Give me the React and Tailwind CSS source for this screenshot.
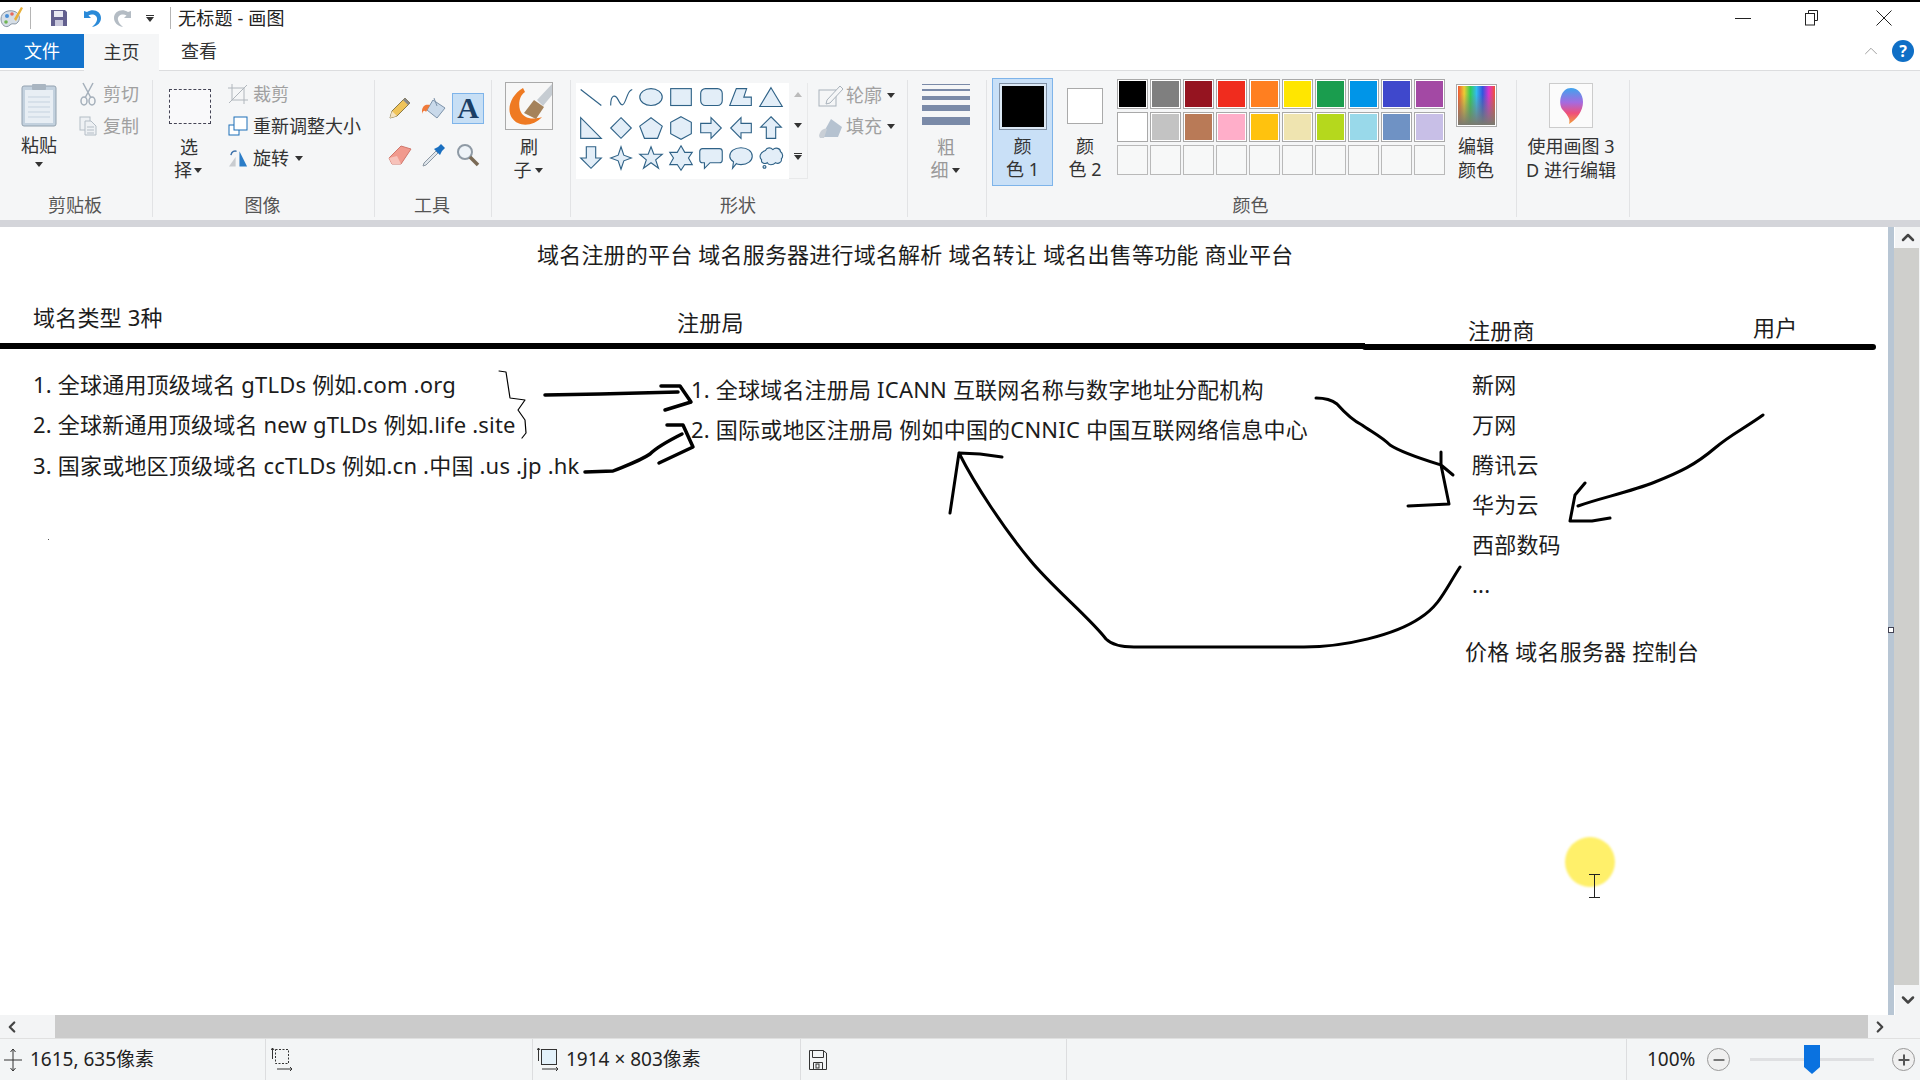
import React from 'react';
import { ChevronUp, ChevronDown, ChevronLeft, ChevronRight, Minus, Plus } from 'lucide-react';

const Caret = ({ className = '' }) => (
  <svg width="8" height="5" viewBox="0 0 8 5" className={className}><path d="M0 0h8L4 5z" fill="#333" /></svg>
);

const shapes = [
  <path d="M4 7 26 24" fill="none" />,
  <path d="M4 24C4 12 9 12 12 18S17 26 20 18 24 8 27 7" fill="none" />,
  <ellipse cx="15" cy="15" rx="12" ry="9" />,
  <rect x="4" y="6" width="22" height="18" />,
  <rect x="4" y="6" width="23" height="18" rx="5" />,
  <path d="M3 24 10 6H21L18 15H26V24Z" />,
  <path d="M15 5 27 25H3Z" />,
  <path d="M4 5 26 27H4Z" />,
  <path d="M15 5 26 16 15 27 4 16Z" />,
  <path d="M15 5 27 14 22 27H8L3 14Z" />,
  <path d="M15 4 26 10V22L15 28 4 22V10Z" />,
  <path d="M4 11H15V5L26 16 15 27V21H4Z" />,
  <path d="M26 11H15V5L4 16 15 27V21H26Z" />,
  <path d="M15 4 26 15H20V27H10V15H4Z" />,
  <path d="M10 4H20V16H26L15 27 4 16H10Z" />,
  <path d="M15 4 18 13 26 16 18 19 15 28 12 19 4 16 12 13Z" />,
  <path d="M15 4 18 12 27 12 20 18 23 27 15 21 7 27 10 18 3 12 12 12Z" />,
  <path d="M15 3 19 10H27L23 16 27 23H19L15 29 11 23H3L7 16 3 10H11Z" />,
  <path d="M6 6H24Q27 6 27 9V18Q27 21 24 21H14L8 27V21H6Q3 21 3 18V9Q3 6 6 6Z" />,
  <path d="M15 5C22 5 27 9 27 14S22 23 15 23C13 23 11 23 10 22L6 27 7 20C4 18 3 16 3 14 3 9 8 5 15 5Z" />,
  <path d="M9 8C11 4 15 5 17 7 20 4 25 6 25 9 28 11 28 15 26 17 27 20 23 23 20 21 17 24 12 24 11 21 8 23 4 21 5 18 2 15 3 10 9 8ZM8 24A1.500 1.500 0 1 0 8.100 24" />,
];

const row1 = ['bg-[#000000]', 'bg-[#7f7f7f]', 'bg-[#951420]', 'bg-[#f02c1e]', 'bg-[#ff7f20]', 'bg-[#ffe600]', 'bg-[#1a9d4e]', 'bg-[#0095e8]', 'bg-[#3f48cc]', 'bg-[#a349a4]'];
const row2 = ['bg-[#ffffff]', 'bg-[#c3c3c3]', 'bg-[#b97a57]', 'bg-[#ffaec9]', 'bg-[#ffc20e]', 'bg-[#efe4b0]', 'bg-[#b5d81d]', 'bg-[#99d9ea]', 'bg-[#6f92c4]', 'bg-[#c8bfe7]'];

const canvasText = [
  ['left-[537px] top-[13px]', '域名注册的平台 域名服务器进行域名解析 域名转让 域名出售等功能 商业平台'],
  ['left-[33px] top-[76px]', '域名类型 3种'],
  ['left-[677px] top-[81px]', '注册局'],
  ['left-[1468px] top-[89px]', '注册商'],
  ['left-[1753px] top-[86px]', '用户'],
  ['left-[33px] top-[143px]', '1. 全球通用顶级域名 gTLDs 例如.com .org'],
  ['left-[33px] top-[183px]', '2. 全球新通用顶级域名 new gTLDs 例如.life .site'],
  ['left-[33px] top-[224px]', '3. 国家或地区顶级域名 ccTLDs 例如.cn .中国 .us .jp .hk'],
  ['left-[691px] top-[148px]', '1. 全球域名注册局 ICANN 互联网名称与数字地址分配机构'],
  ['left-[691px] top-[188px]', '2. 国际或地区注册局 例如中国的CNNIC 中国互联网络信息中心'],
  ['left-[1472px] top-[143px]', '新网'],
  ['left-[1472px] top-[183px]', '万网'],
  ['left-[1472px] top-[223px]', '腾讯云'],
  ['left-[1472px] top-[263px]', '华为云'],
  ['left-[1472px] top-[303px]', '西部数码'],
  ['left-[1472px] top-[343px]', '...'],
  ['left-[1465px] top-[410px]', '价格 域名服务器 控制台'],
];

const Group = ({ width, label, children }) => (
  <div className={`${width} h-full shrink-0 flex flex-col border-r border-[#e2e3e5]`}>
    <div className="flex-1 flex -mt-[2px]">{children}</div>
    <div className="h-[24px] leading-[24px] text-center text-[18px] text-[#555] pr-[2px]">{label}</div>
  </div>
);

const Row = ({ icon, text, muted, caret }) => (
  <div className={`h-[32px] flex items-center gap-[5px] ${muted ? 'text-[#a0a0a0]' : 'text-[#333]'}`}>
    <div className="w-[20px] h-[22px] flex items-center justify-center">{icon}</div>
    <span className="text-[18px]">{text}</span>
    {caret && <Caret className="ml-[1px]" />}
  </div>
);

export default function App() {
  return (
    <div className="w-[1920px] h-[1080px] flex flex-col overflow-hidden bg-white font-['Noto_Sans','Noto_Sans_CJK_SC',sans-serif] text-[#222]">
      <div className="h-[2px] bg-black" />

      {/* title bar */}
      <div className="h-[32px] flex items-center bg-white relative">
        <svg width="24" height="26" viewBox="0 0 24 26" className="-ml-[1px]">
          <path d="M2 14C2 7 9 5 14 6 20 7 22 13 19 17 16 21 14 17 11 20 7 24 2 20 2 14Z" fill="#d6dee6" stroke="#8a97a5" />
          <circle cx="8" cy="11" r="2" fill="#4a90d9" /><circle cx="13" cy="9" r="1.800" fill="#e86a5c" /><circle cx="7" cy="17" r="1.800" fill="#6fb552" />
          <path d="M15 14 22 2 24 3 17 16Z" fill="#e8b13a" />
        </svg>
        <div className="w-px h-[22px] bg-[#b5b5b5] ml-[7px]" />
        <svg width="18" height="18" viewBox="0 0 18 18" className="ml-[19px]">
          <path d="M1 1H15L17 3V17H1Z" fill="#63608f" /><rect x="4" y="2" width="9" height="6" fill="#e8e8f2" /><rect x="5" y="11" width="8" height="6" fill="#c9c8dc" />
        </svg>
        <svg width="20" height="22" viewBox="0 0 20 22" className="ml-[14px]">
          <path d="M2 4V11H9L6.500 8.500C10 6 16 8 15 13 14.500 16 12 18 10 20 16 19 19 15 19 11 19 4 11 1 5 5Z" fill="#2a8ad8" />
        </svg>
        <svg width="20" height="22" viewBox="0 0 20 22" className="ml-[11px]">
          <path d="M18 4V11H11L13.500 8.500C10 6 4 8 5 13 5.500 16 8 18 10 20 4 19 1 15 1 11 1 4 9 1 15 5Z" fill="#b4bcc4" />
        </svg>
        <div className="ml-[13px] flex flex-col items-center gap-[1px]">
          <div className="w-[8px] h-px bg-[#333]" />
          <Caret />
        </div>
        <div className="w-px h-[22px] bg-[#b5b5b5] ml-[16px]" />
        <span className="ml-[7px] text-[18px] text-[#222] tracking-[0.2px]">无标题 - 画图</span>
        <div className="ml-auto flex items-center">
          <div className="w-[16px] h-px bg-[#222] mr-[53px]" />
          <svg width="16" height="16" viewBox="0 0 16 16" className="mr-[56px]" fill="none" stroke="#222">
            <path d="M4.500 3.500V0.500H13.500V10.500H10.500" /><rect x="1.500" y="3.500" width="9" height="11.500" />
          </svg>
          <svg width="16" height="16" viewBox="0 0 16 16" className="mr-[28px]" stroke="#222"><path d="M0.500 0.500 15.500 15.500M15.500 0.500 0.500 15.500" /></svg>
        </div>
      </div>

      {/* tabs */}
      <div className="h-[37px] flex items-start bg-white border-b border-[#dcdddf] text-[18px]">
        <div className="w-[84px] h-[34px] bg-[#1373cc] text-white flex items-center justify-center pt-[1px]">文件</div>
        <div className="w-[75px] h-[37px] bg-[#f5f6f7] text-[#333] flex items-center justify-center pb-[1px]">主页</div>
        <div className="w-[80px] h-[34px] text-[#333] flex items-center justify-center pt-[1px]">查看</div>
        <div className="ml-auto flex items-center h-[34px]">
          <ChevronUp size={22} strokeWidth={1} className="text-[#999] mr-[10px]" />
          <div className="w-[22px] h-[22px] mr-[6px] rounded-full bg-[#0f6fc6] text-white text-[16px] font-bold flex items-center justify-center">?</div>
        </div>
      </div>

      {/* ribbon */}
      <div className="h-[149px] shrink-0 flex bg-[#f5f6f7] pt-[9px] pb-[3px]">
        <Group width="w-[153px]" label="剪贴板">
          <div className="w-[78px] flex flex-col items-center">
            <svg width="36" height="44" viewBox="0 0 36 44" className="mt-[5px]">
              <rect x="1" y="3" width="34" height="40" rx="2" fill="#c3d1de" stroke="#93a2b0" />
              <rect x="4" y="7" width="28" height="33" fill="#e8eef4" />
              <path d="M7 14H29M7 19H29M7 24H29M7 29H29M7 34H29" stroke="#c5d2df" />
              <rect x="11" y="1" width="14" height="6" rx="1" fill="#a9b5c1" />
            </svg>
            <div className="text-[18px] leading-[24px] mt-[6px] text-[#333]">粘贴</div>
            <Caret className="mt-[5px]" />
          </div>
          <div className="flex flex-col">
            <Row muted text="剪切" icon={
              <svg width="16" height="24" viewBox="0 0 16 24" fill="none" stroke="#a5b0bb" strokeWidth="1.500">
                <path d="M3 1 11 16M13 1 5 16" /><ellipse cx="4" cy="19" rx="3" ry="4" /><ellipse cx="12" cy="19" rx="3" ry="4" />
              </svg>} />
            <Row muted text="复制" icon={
              <svg width="18" height="20" viewBox="0 0 18 20" fill="#eef1f4" stroke="#b4bdc6">
                <rect x="1" y="1" width="10" height="13" /><path d="M6 5H12L17 10V19H6Z" /><path d="M8 11H15M8 14H15M8 17H15" />
              </svg>} />
          </div>
        </Group>

        <Group width="w-[222px]" label="图像">
          <div className="w-[72px] flex flex-col items-center text-[18px] leading-[23px] text-[#333]">
            <div className="w-[42px] h-[35px] mt-[11px] ml-[2px] border border-dashed border-[#445] bg-white/40" />
            <div className="mt-[12px]">选</div>
            <div className="flex items-center gap-[2px] -ml-[2px]">择<Caret /></div>
          </div>
          <div className="flex flex-col ml-[3px]">
            <Row muted text="裁剪" icon={
              <svg width="20" height="20" viewBox="0 0 20 20" fill="none" stroke="#b0b6bc"><path d="M4 0V16H20M0 4H16V20M1 19 19 1" /></svg>} />
            <Row text="重新调整大小" icon={
              <svg width="20" height="20" viewBox="0 0 20 20" fill="#fff" stroke="#1d6fb8"><rect x="1" y="9" width="10" height="10" /><rect x="6" y="1" width="13" height="13" /></svg>} />
            <Row caret text="旋转" icon={
              <svg width="21" height="20" viewBox="0 0 21 20"><path d="M1 19 8 9V19Z" fill="#c9ccd0" /><path d="M12 3V19H20Z" fill="#2a7cc7" /><path d="M3 7C4 3 7 2 9 3" fill="none" stroke="#3a6fa8" strokeWidth="1.500" /></svg>} />
          </div>
        </Group>

        <Group width="w-[117px]" label="工具">
          <div className="pl-[8px] pt-[14px] grid grid-cols-[33px_35px_34px] grid-rows-[32px_15px_32px] items-center justify-items-center">
            <svg width="22" height="22" viewBox="0 0 22 22">
              <path d="M1 21 3 14 16 1 21 6 8 19Z" fill="#f0c45a" stroke="#8a7a4a" /><path d="M1 21 3 14 8 19Z" fill="#f5e3c0" /><path d="M14 3 19 8 21 6 16 1Z" fill="#888" />
            </svg>
            <svg width="26" height="24" viewBox="0 0 26 24">
              <path d="M12 4 24 12 16 22 6 14Z" fill="#c9d9ea" stroke="#7d93aa" /><path d="M13 2 16 10" stroke="#7d93aa" fill="none" /><path d="M1 14C2 9 5 8 9 9L5 16C4 14 2 14 1 18Z" fill="#f07a3a" />
            </svg>
            <div className="w-[32px] h-[31px] bg-[#c7dff5] border border-[#7eb4ea] flex items-center justify-center font-['Liberation_Serif',serif] font-bold text-[30px] leading-none text-[#1b3f66]">A</div>
            <div className="col-span-3" />
            <svg width="26" height="22" viewBox="0 0 26 22">
              <path d="M2 14 14 2 24 5 14 20 5 20Z" fill="#f19a8e" stroke="#d0776c" /><path d="M2 14 5 20 14 20 10 12Z" fill="#f7c2ba" />
            </svg>
            <svg width="24" height="24" viewBox="0 0 24 24">
              <path d="M14 8 2 20 1 23 4 22 16 10Z" fill="#dfe5eb" stroke="#8c98a4" /><path d="M12 6 18 12 20 8 23 5 19 1 16 4Z" fill="#1a6fc0" />
            </svg>
            <svg width="24" height="24" viewBox="0 0 24 24" fill="none">
              <circle cx="9" cy="9" r="7" fill="#eef3f8" stroke="#8f9aa5" strokeWidth="2" /><path d="M14 14 22 22" stroke="#7a6a55" strokeWidth="3.500" />
            </svg>
          </div>
        </Group>

        <Group width="w-[79px]" label="">
          <div className="w-full pr-[4px] flex flex-col items-center text-[18px] leading-[23px] text-[#333]">
            <div className="w-[48px] h-[48px] mt-[4px] bg-[#f7f7f7] border border-[#aaa] overflow-hidden">
              <svg width="46" height="46" viewBox="0 0 46 46">
                <path d="M17 5C5 12 0 26 6 35 13 45 28 43 36 34 27 37 17 36 14 27 12 20 14 12 19 9Z" fill="#ef7a22" />
                <path d="M18 30 28 17 38 24 30 36Z" fill="#a5825a" />
                <path d="M31 17 46 1V12L37 23Z" fill="#c6ccd2" />
              </svg>
            </div>
            <div className="mt-[6px]">刷</div>
            <div className="flex items-center gap-[3px] -ml-[2px]">子<Caret /></div>
          </div>
        </Group>

        <Group width="w-[337px]" label="形状">
          <div className="pl-[5px] pt-[5px] flex items-start">
            <div className="w-[213px] h-[96px] bg-white grid grid-cols-[repeat(7,30px)] auto-rows-[30px]">
              {shapes.map((s, i) => (
                <svg key={i} width="30" height="30" viewBox="0 0 30 32" fill="#e3eef8" stroke="#2f6287" strokeWidth="1.200">{s}</svg>
              ))}
            </div>
            <div className="w-[19px] h-[96px] flex flex-col items-center justify-between pt-[9px] pb-[18px] border-r border-b border-[#e8e9ea]">
              <svg width="8" height="5" viewBox="0 0 8 5"><path d="M0 5h8L4 0z" fill="#bbb" /></svg>
              <Caret />
              <div className="flex flex-col items-center gap-[1px]"><div className="w-[8px] h-px bg-[#333]" /><Caret /></div>
            </div>
            <div className="ml-[10px] -mt-[3px]">
              <Row0 icon={
                <svg width="26" height="22" viewBox="0 0 26 22" fill="none" stroke="#a9b2bb"><rect x="1" y="5" width="17" height="16" /><path d="M9 15 22 1 25 4 12 18 8 19Z" fill="#f5f6f7" /></svg>} text="轮廓" />
              <Row0 icon={
                <svg width="26" height="24" viewBox="0 0 26 24"><path d="M3 22 13 4 24 12 20 22Z" fill="#b5c2d0" /><path d="M1 21C2 15 6 13 9 14L6 23H2Z" fill="#c9cfd6" /></svg>} text="填充" />
            </div>
          </div>
        </Group>

        <Group width="w-[79px]" label="">
          <div className="w-full pr-[2px] flex flex-col items-center text-[18px] leading-[23px] text-[#999]">
            <div className="w-[48px] mt-[6px] flex flex-col">
              <div className="h-px bg-[#7a8aa8]" />
              <div className="h-[2px] bg-[#7a8aa8] mt-[4px]" />
              <div className="h-[4px] bg-[#7a8aa8] mt-[5px]" />
              <div className="h-[6px] bg-[#7a8aa8] mt-[5px]" />
              <div className="h-[8px] bg-[#7a8aa8] mt-[6px]" />
            </div>
            <div className="mt-[11px]">粗</div>
            <div className="flex items-center gap-[3px] -ml-[2px]">细<Caret /></div>
          </div>
        </Group>

        <Group width="w-[530px]" label="颜色">
          <div className="flex items-start pl-[5px]">
            <div className="w-[61px] h-[108px] bg-[#c9e0f7] border border-[#7eb4ea] flex flex-col items-center text-[18px] leading-[23px] text-[#333]">
              <div className="w-[48px] h-[47px] mt-[4px] border border-[#7f8fa3] p-[2px] bg-[#dbe8f5]">
                <div className="w-full h-full bg-black" />
              </div>
              <div className="mt-[5px]">颜</div>
              <div>色 1</div>
            </div>
            <div className="w-[54px] ml-[5px] flex flex-col items-center text-[18px] leading-[23px] text-[#333]">
              <div className="w-[36px] h-[36px] mt-[10px] bg-white border border-[#aaa]" />
              <div className="mt-[11px]">颜</div>
              <div>色 2</div>
            </div>
            <div className="ml-[5px] mt-[1px] grid grid-cols-[repeat(10,31px)] auto-rows-[30px] gap-x-[2px] gap-y-[3px]">
              {row1.map((c) => (
                <div key={c} className="border border-[#a9a9a9] p-[1px] bg-white"><div className={`w-full h-full ${c}`} /></div>
              ))}
              {row2.map((c) => (
                <div key={c} className="border border-[#a9a9a9] p-[1px] bg-white"><div className={`w-full h-full ${c}`} /></div>
              ))}
              {row1.map((c) => (
                <div key={c} className="border border-[#b9b9b9] bg-[#f7f8f8]" />
              ))}
            </div>
            <div className="w-[56px] ml-[3px] flex flex-col items-center text-[18px] leading-[24px] text-[#333]">
              <div className="w-[41px] h-[43px] mt-[6px] border border-[#aaa] p-[1px] bg-white">
                <div className="w-full h-full bg-[linear-gradient(to_bottom,transparent_20%,#7a7a70),linear-gradient(to_right,#e53,#ec3,#3c5,#3be,#35d,#d3c,#e53)]" />
              </div>
              <div className="mt-[7px]">编辑</div>
              <div>颜色</div>
            </div>
          </div>
        </Group>

        <Group width="w-[113px]" label="">
          <div className="w-full pr-[4px] flex flex-col items-center text-[18px] leading-[24px] text-[#333] whitespace-nowrap">
            <div className="w-[44px] h-[45px] mt-[5px] bg-[#fbfbfb] border border-[#ccc] flex items-center justify-center">
              <svg width="26" height="38" viewBox="0 0 26 38">
                <defs>
                  <linearGradient id="p3d" x1="0" y1="0" x2="0" y2="1">
                    <stop offset="0" stopColor="#3fa4ee" /><stop offset="0.4" stopColor="#a46be0" /><stop offset="0.7" stopColor="#ef4f7a" /><stop offset="1" stopColor="#f2a13a" />
                  </linearGradient>
                </defs>
                <path d="M13 1C20 1 25 7 25 15 25 24 19 32 11 37 13 31 8 27 4 22 0 15 3 1 13 1Z" fill="url(#p3d)" />
              </svg>
            </div>
            <div className="mt-[6px]">使用画图 3</div>
            <div>D 进行编辑</div>
          </div>
        </Group>
      </div>

      <div className="h-[7px] shrink-0 bg-[#d4d5da]" />

      {/* canvas and vertical scrollbar */}
      <div className="h-[788px] shrink-0 flex">
        <div className="w-[1888px] relative bg-white text-[22px] leading-[29px] tracking-[0.2px] text-[#1c1c1c] whitespace-nowrap overflow-hidden">
          {canvasText.map(([pos, t]) => (
            <div key={t} className={`absolute ${pos}`}>{t}</div>
          ))}
          <svg width="1888" height="788" viewBox="0 227 1888 788" className="absolute left-0 top-0" fill="none" stroke="#000" strokeLinejoin="round" strokeLinecap="round">
            <path d="M0 346H1365" strokeWidth="6" strokeLinecap="butt" />
            <path d="M1365 347H1873" strokeWidth="6" />
            <path d="M499 371 506 372 510 398 525 400 518 410 525 420 526 433 522 438" strokeWidth="1.200" />
            <g strokeWidth="3.500">
              <path d="M545 395 600 394 678 392M661 386 680 386 691 402 665 410" />
              <path d="M585 472 613 471C625 466 640 461 650 454 658 446 670 440 682 434M667 425 683 425 693 447 659 463" />
            </g>
            <g strokeWidth="3">
              <path d="M1460 567C1445 590 1440 605 1420 618 1395 635 1345 647 1304 647L1134 647C1120 647 1112 645 1106 639 1090 618 1052 587 1030 560 1005 530 975 485 959 453M950 513 959 453 980 454 1002 457" />
              <path d="M1316 398C1325 398 1332 400 1337 404 1345 413 1352 420 1362 425 1372 432 1382 437 1390 445 1402 453 1425 460 1441 465L1453 475M1441 452 1441 465 1449 504 1408 506" />
              <path d="M1763 415C1745 428 1730 435 1715 448 1695 465 1680 472 1655 482 1630 492 1600 498 1578 506M1585 483 1575 495 1570 521 1592 521 1610 518" />
            </g>
          </svg>
          <div className="absolute left-[48px] top-[312px] w-px h-px bg-[#555]" />
          <div className="absolute left-[1565px] top-[610px] w-[50px] h-[50px] rounded-full bg-[#fff06a] blur-[1px]" />
          <svg width="12" height="24" viewBox="0 0 12 24" className="absolute left-[1589px] top-[647px]" stroke="#222" fill="none">
            <path d="M0 0.500H11M0 23.500H11M5.500 0.500V23.500" />
          </svg>
        </div>
        <div className="w-[6px] bg-[#b8c6d4] relative">
          <div className="absolute left-0 top-[400px] w-[6px] h-[6px] bg-white border border-[#445]" />
        </div>
        <div className="w-px bg-white" />
        <div className="flex-1 flex flex-col items-center bg-[#f3f4f5]">
          <ChevronUp size={20} strokeWidth={3} className="text-[#444] h-[21px]" />
          <div className="w-full flex-1 bg-[#cfcfcc] mr-[2px]" />
          <ChevronDown size={20} strokeWidth={3} className="text-[#444] h-[30px]" />
        </div>
      </div>

      {/* horizontal scrollbar */}
      <div className="h-[24px] shrink-0 flex items-center bg-[#f3f4f5] border-b border-[#e0e0e0]">
        <div className="w-[55px] flex justify-start pl-[3px]"><ChevronLeft size={18} strokeWidth={3} className="text-[#444]" /></div>
        <div className="w-[1813px] h-full bg-[#cbcbcb]" />
        <div className="flex-1 pl-[3px]"><ChevronRight size={18} strokeWidth={3} className="text-[#444]" /></div>
      </div>

      {/* status bar */}
      <div className="flex-1 flex items-center bg-[#f3f5f6] text-[19px] text-[#222]">
        <div className="w-[266px] h-full flex items-center border-r border-[#dcdddf]">
          <svg width="20" height="24" viewBox="0 0 20 24" className="ml-[3px]" fill="none" stroke="#333">
            <path d="M10 1V23M1 12H19M7.500 4 10 1 12.500 4M7.500 20 10 23 12.500 20" />
          </svg>
          <span className="ml-[7px]">1615, 635像素</span>
        </div>
        <div className="w-[267px] h-full flex items-center border-r border-[#dcdddf]">
          <svg width="22" height="26" viewBox="0 0 22 26" className="ml-[5px]" fill="none" stroke="#333">
            <rect x="4.500" y="2.500" width="13" height="14" strokeDasharray="2 1.500" /><path d="M1.500 12V1M0 3 1.500 1 3 3M6 22H21M19 20 21 22 19 24" />
          </svg>
        </div>
        <div className="w-[268px] h-full flex items-center border-r border-[#dcdddf]">
          <svg width="22" height="26" viewBox="0 0 22 26" className="ml-[4px]" stroke="#333">
            <rect x="4.500" y="2.500" width="15" height="15" fill="#e3f1fa" /><path d="M1.500 14V1M0 3 1.500 1 3 3M5 22H21M19 20 21 22 19 24" fill="none" />
          </svg>
          <span className="ml-[7px]">1914 × 803像素</span>
        </div>
        <div className="w-[266px] h-full flex items-center border-r border-[#dcdddf]">
          <svg width="20" height="22" viewBox="0 0 20 22" className="ml-[7px]" fill="none" stroke="#333">
            <path d="M1.500 1.500H15L18.500 4V20.500H1.500Z" /><path d="M4.500 1.500V8.500H15.500V1.500M5.500 20.500V13.500H14.500V20.500" /><rect x="8" y="15" width="3" height="4" />
          </svg>
        </div>
        <div className="w-[560px] h-full border-r border-[#dcdddf]" />
        <span className="ml-[20px] w-[50px]">100%</span>
        <div className="w-[23px] h-[23px] ml-[10px] rounded-full border border-[#999] bg-[#f0f0f0] flex items-center justify-center">
          <Minus size={16} strokeWidth={3} className="text-[#777]" />
        </div>
        <div className="w-[124px] ml-[20px] h-[3px] bg-[#dfe0e2] relative">
          <svg width="16" height="29" viewBox="0 0 16 29" className="absolute left-[54px] -top-[13px]"><path d="M0 0H16V22L8 29 0 22Z" fill="#0a72e0" /></svg>
        </div>
        <div className="w-[23px] h-[23px] ml-[18px] rounded-full border border-[#999] bg-[#f0f0f0] flex items-center justify-center">
          <Plus size={16} strokeWidth={3} className="text-[#555]" />
        </div>
      </div>
    </div>
  );
}

function Row0({ icon, text }) {
  return (
    <div className="h-[31px] flex items-center gap-[2px] text-[18px] text-[#a0a0a0]">
      <div className="w-[26px] h-[24px] flex items-center justify-center">{icon}</div>
      <span>{text}</span>
      <Caret className="ml-[3px]" />
    </div>
  );
}
